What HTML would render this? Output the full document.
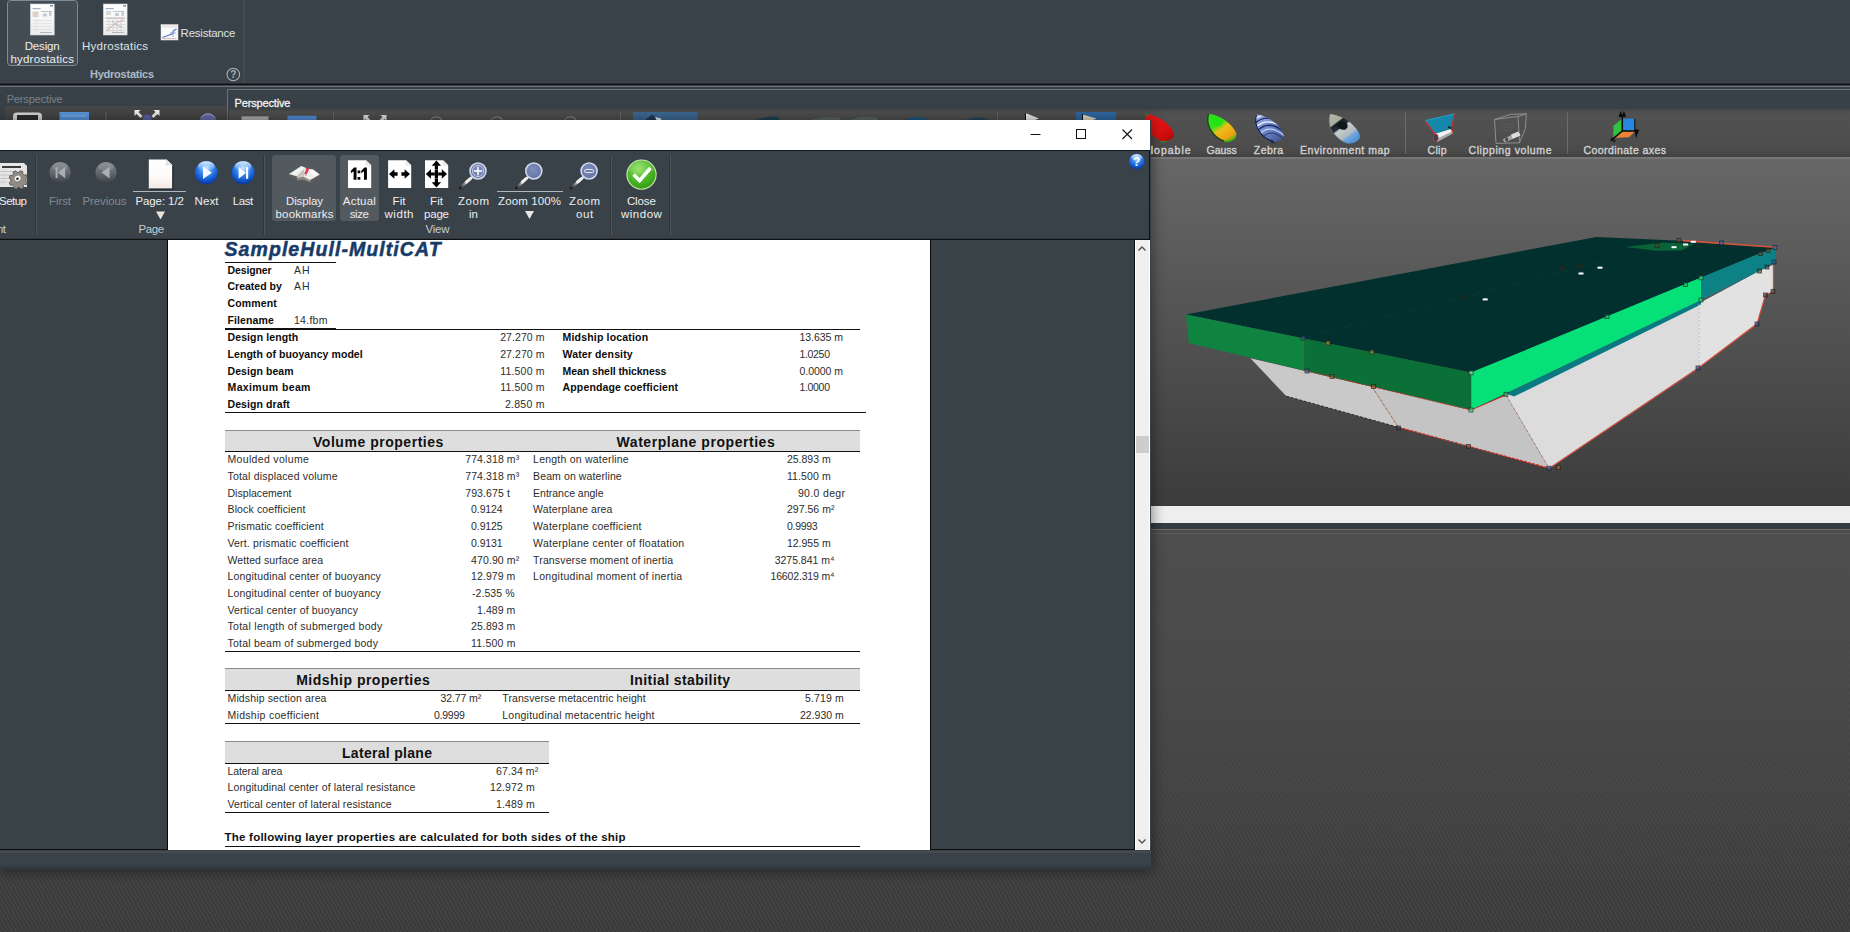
<!DOCTYPE html>
<html><head><meta charset="utf-8"><title>Design hydrostatics</title>
<style>
html,body{margin:0;padding:0;}
body{width:1850px;height:932px;overflow:hidden;position:relative;background:#444;font-family:"Liberation Sans",sans-serif;}
.a{position:absolute;}
.t{position:absolute;white-space:pre;line-height:1;font-family:"Liberation Sans",sans-serif;}
svg{position:absolute;overflow:visible;}
/* textured background */
#bg{left:0;top:0;width:1850px;height:932px;background:linear-gradient(#4e4e4e 0,#4e4e4e 540px,#4c4c4c 620px,#494949 700px,#454545 780px,#404040 860px,#3c3c3c 932px);}
#bgtex{left:0;top:520px;width:1850px;height:412px;background:repeating-linear-gradient(60deg,rgba(255,255,255,.03) 0 1.7px,rgba(0,0,0,.04) 1.7px 3.4px);-webkit-mask-image:linear-gradient(transparent 0,rgba(0,0,0,.3) 150px,#000 400px);mask-image:linear-gradient(transparent 0,rgba(0,0,0,.3) 150px,#000 400px);}
#ribbon{left:0;top:0;width:1850px;height:83px;background:#3a4249;}
#rline{left:0;top:83px;width:1850px;height:2px;background:linear-gradient(#262c31 0,#262c31 50%,#0e1113 50%);}
#rline2{left:0;top:85px;width:1850px;height:2px;background:linear-gradient(#3a4248 0,#3a4248 50%,#6a737a 50%);}
#tabrow{left:0;top:87px;width:1850px;height:34px;background:#384147;}
#tb1{left:5px;top:106px;width:222px;height:14px;background:#474747;}
#pan2{left:227px;top:89px;width:1623px;height:70px;border-top:1px solid #6a7379;border-left:1px solid #6a7379;box-sizing:border-box;background:#384147;}
#tb2{left:229px;top:108px;width:1621px;height:50px;background:linear-gradient(#3a4046 0,#3f4447 1px,#464849 2px,#4c4c4c 3px,#4f4f4f 4px,#515151 10px,#4c4c4c 40px,#484848 45px,#434343 47px,#434343 50px);}
#tbline{left:1150px;top:157px;width:700px;height:2px;background:#767676;}
#vp{left:1150px;top:159px;width:700px;height:347px;background:linear-gradient(#676767,#3c3c3c);}
#wbar{left:1150px;top:506px;width:700px;height:17px;background:#eeeeee;}
#wstrip{left:1150px;top:523px;width:700px;height:6px;background:#333c43;}
#wstrip2{left:1150px;top:529px;width:700px;height:1px;background:#707070;}
#wstrip3{left:1150px;top:533px;width:700px;height:1px;background:#5a5a5a;}
/* window */
#win{left:0;top:120px;width:1151px;height:750px;background:#3a4249;box-shadow:0 0 13px 1px rgba(0,0,0,.45);}
#title{left:0;top:0;width:1150px;height:30px;background:#fff;}
#tline{left:0;top:30px;width:1150px;height:1px;background:#14181b;}
#wrib{left:0;top:31px;width:1150px;height:87px;background:#3a4249;}
#wribline{left:0;top:118px;width:1150px;height:1px;background:#2f363c;}
#wribline2{left:0;top:119px;width:1150px;height:1px;background:#0c0e10;}
#wrb{left:1149px;top:31px;width:1px;height:89px;background:#0c0e10;}
#sbl{left:1134px;top:120px;width:1px;height:610px;background:#0c0e10;}
#docbot{left:0;top:729px;width:167px;height:1px;background:#0c0e10;}
#docbot2{left:931px;top:729px;width:204px;height:1px;background:#0c0e10;}
#winbot{left:0;top:744px;width:1151px;height:6px;background:linear-gradient(rgba(0,0,0,0),rgba(0,0,0,.22));}
#winbot2{left:0;top:731px;width:1151px;height:2px;background:#444c52;}
#docbg{left:0;top:120px;width:1134px;height:610px;background:#394247;}
#page{left:167px;top:120px;width:762px;height:610px;background:#fff;border-left:1px solid #050607;border-right:1px solid #050607;}
#sb{left:1135px;top:120px;width:15px;height:610px;background:#f0f0f0;box-shadow:inset 1px 0 0 #fff,inset -1px 0 0 #fff;}
#sbt{left:1136px;top:316px;width:13px;height:17px;background:#cdcdcd;}
.sep{position:absolute;width:1px;background:#4b545b;box-shadow:-1px 0 0 #30383e;}
.btnbg{position:absolute;background:#525a60;border-radius:3px;}
.hl{position:absolute;background:#111;height:1px;}
.band{position:absolute;background:#dedede;border-top:1px solid #8a8a8a;box-sizing:border-box;}
.band:after{content:"";position:absolute;left:0;right:0;bottom:0;height:1.3px;background:#111;}
</style></head>
<body>
<div class="a" id="bg"></div>
<div class="a" id="bgtex"></div>
<div class="a" id="ribbon"></div>
<div class="a" id="rline"></div>
<div class="a" id="rline2"></div>
<div class="a" id="tabrow"></div>
<div class="a" id="tb1"></div>
<div class="a" id="pan2"></div>
<div class="a" id="tb2"></div>
<div class="a" id="tbline"></div>
<div class="a" id="vp"></div>
<div class="a" id="wbar"></div>
<div class="a" id="wstrip"></div>
<div class="a" id="wstrip2"></div>
<div class="a" id="wstrip3"></div>

<!-- app ribbon decorations -->
<svg class="a" style="left:0;top:0" width="1850" height="160" viewBox="0 0 1850 160">
  <defs>
    <linearGradient id="gpage" x1="0" y1="0" x2="0" y2="1"><stop offset="0" stop-color="#ffffff"/><stop offset="1" stop-color="#ececec"/></linearGradient>
  </defs>
  <!-- selected button -->
  <rect x="7.5" y="0.5" width="70" height="65" rx="3" fill="#444c54" stroke="#7f8b96" stroke-width="1"/>
  <!-- page icon 1 -->
  <g>
    <rect x="30.4" y="4" width="23.8" height="31" fill="url(#gpage)" stroke="#cfd4d8" stroke-width=".6"/>
    <rect x="32.5" y="8" width="8" height="1.2" fill="#9fb3c8"/>
    <rect x="32.5" y="11.5" width="6" height="5.5" fill="#d9d3c2"/>
    <rect x="41" y="11" width="11" height="1" fill="#b9c3cc"/>
    <rect x="43" y="13.5" width="4" height="3" fill="#c5ccd6"/>
    <rect x="49" y="12" width="2.5" height="4" fill="#c5ccd6"/>
    <rect x="32.5" y="20" width="19" height=".8" fill="#dcdcdc"/>
    <rect x="32.5" y="23" width="19" height=".8" fill="#e0e0e0"/>
    <rect x="32.5" y="26" width="19" height=".8" fill="#e0e0e0"/>
    <rect x="32.5" y="29" width="19" height=".8" fill="#dcdcdc"/>
    <rect x="36" y="19" width=".8" height="12" fill="#e2e2e2"/>
    <rect x="40" y="32" width="12" height="1" fill="#b5b5b5"/>
    <rect x="50" y="5" width="3" height="1.6" fill="#8c959d"/>
  </g>
  <!-- page icon 2 -->
  <g>
    <rect x="103.3" y="4" width="23.8" height="31" fill="url(#gpage)" stroke="#cfd4d8" stroke-width=".6"/>
    <rect x="105.5" y="8" width="8" height="1.2" fill="#9fb3c8"/>
    <rect x="106" y="11" width="5" height="4" fill="#d8d8d8"/>
    <rect x="113" y="11" width="11" height="1" fill="#b9c3cc"/>
    <rect x="115" y="13" width="4" height="3" fill="#c5ccd6"/>
    <rect x="121.5" y="12" width="2.5" height="4" fill="#c5ccd6"/>
    <rect x="105.5" y="17.5" width="19.5" height="1.2" fill="#b7b7b7"/>
    <g stroke="#cfcfcf" stroke-width=".7" fill="none">
      <path d="M105.5 21.5h19.5M105.5 24.5h19.5M105.5 27.5h19.5M105.5 30.5h19.5M109 19v13M113 19v13M117 19v13M121 19v13"/>
    </g>
    <path d="M106 31 L112 26 L118 22 L124 20" stroke="#d9a0a0" stroke-width=".8" fill="none"/>
    <path d="M112 21 L116 25 L122 27" stroke="#9fb0d8" stroke-width=".8" fill="none"/>
    <rect x="112" y="32" width="12" height="1" fill="#b5b5b5"/>
    <rect x="123" y="5" width="3" height="1.6" fill="#8c959d"/>
  </g>
  <!-- resistance icon -->
  <g>
    <rect x="161" y="24.6" width="17" height="15.4" fill="#fbfbfb" stroke="#d5d5d5" stroke-width=".6"/>
    <rect x="162" y="25.5" width="15" height="2" fill="#e6e6e6"/>
    <path d="M162.5 37.5 L168 35.5 L172 34 L174 30.5 L176.5 29" stroke="#4f79c8" stroke-width="1.2" fill="none"/>
    <path d="M162.5 38.5 h14" stroke="#d8a8a8" stroke-width=".8"/>
    <path d="M170 33 h6 M173 30 v7" stroke="#7d97d0" stroke-width=".8"/>
  </g>
  <!-- help circle -->
  <circle cx="233.3" cy="74.5" r="6.3" fill="none" stroke="#a9b3bc" stroke-width="1.1"/>
  <text x="233.3" y="78.3" text-anchor="middle" font-family="Liberation Sans, sans-serif" font-size="10" font-weight="bold" fill="#a9b3bc">?</text>
  <rect x="243.2" y="0" width="1.3" height="83" fill="#4a535a"/>
  <rect x="242.2" y="0" width="1" height="83" fill="#353d43"/>

  <!-- left perspective toolbar (mostly hidden by window) -->
  <path d="M13 120 V116 Q13 112.5 17 112.5 H38 Q42 112.5 42 116 V120 Z" fill="#dcdcdc"/>
  <rect x="17" y="115" width="21" height="5" fill="#2e2e2e"/>
  <rect x="59.5" y="112" width="29.5" height="8" fill="#5b9be2"/>
  <rect x="62" y="115.5" width="24" height="1" fill="#8cbcf0"/>
  <rect x="105.5" y="112" width="1" height="8" fill="#6a6a6a"/>
  <g fill="#f4f4f4">
    <path d="M134.5 110 h6 l-2 2 l4 4 l-2 2 l-4 -4 l-2 2 z"/>
    <path d="M159.5 110 h-6 l2 2 l-4 4 l2 2 l4 -4 l2 2 z"/>
  </g>
  <circle cx="147" cy="119" r="4.5" fill="#5d62a5"/>
  <circle cx="208" cy="122" r="8.5" fill="#6b6fae"/>
  <path d="M201 117.5 a8.5 8.5 0 0 1 14 0" stroke="#a8abd6" stroke-width="1" fill="none"/>

  <!-- second toolbar hints -->
  <rect x="241.5" y="116.4" width="27" height="3.6" fill="#b4b4b4"/>
  <rect x="287.5" y="115.8" width="29" height="4.2" fill="#5590dc"/>
  <rect x="333" y="112" width="1" height="8" fill="#6a6a6a"/>
  <g fill="#e8e8e8">
    <path d="M363.5 115 h6 l-2 2 l3 3 h-4 l-1 -1 l-2 2 z"/>
    <path d="M386.5 115 h-6 l2 2 l-3 3 h4 l1 -1 l2 2 z"/>
  </g>
  <path d="M431 121 a5.5 4 0 0 1 11 0" fill="none" stroke="#8a8a8a" stroke-width="1.2"/>
  <path d="M491.5 121 a5.5 4 0 0 1 11 0" fill="none" stroke="#8a8a8a" stroke-width="1.2"/>
  <path d="M565 121 a5.5 4 0 0 1 11 0" fill="none" stroke="#8a8a8a" stroke-width="1.2"/>
  <rect x="620" y="112" width="1" height="8" fill="#6a6a6a"/>
  <rect x="633" y="112" width="64.5" height="8" fill="#3f6b95"/>
  <path d="M645 120 L652 114.5 L660 120 Z" fill="#1e3c58"/>
  <path d="M655 117 l5.5 1.2 l1 1.8 h-5 z" fill="#e8f4f8"/>
  <path d="M757 120 q10 -5 22 -3 v3 z" fill="#1f4458"/>
  <path d="M810 120 q14 -4 30 -2 v2 z" fill="#5d6a6a"/>
  <path d="M850 120 q12 -5 28 -2 v2 z" fill="#5d6a6a"/>
  <path d="M905 120 q10 -6 22 -1 v1 z" fill="#1f5a80"/>
  <path d="M965 120 q10 -5 22 -1 v1 z" fill="#27485f"/>
  <rect x="997" y="112" width="1" height="8" fill="#6a6a6a"/>
  <path d="M1025.5 113 l13.5 5.5 l-4 1.5 h-9.5 z" fill="#f4f4f4"/>
  <path d="M1025.5 113 v7" stroke="#111" stroke-width="1"/>
  <rect x="1076" y="112" width="40" height="8" fill="#2f6aa6"/>
  <path d="M1082.5 114.5 l14 4 l-3 1.5 h-11 z" fill="#e8e0c8"/>
  <path d="M1082.5 114 v6" stroke="#111" stroke-width="1"/>
</svg>


<!-- right toolbar icons -->
<svg class="a" style="left:1140px;top:105px" width="710" height="55" viewBox="1140 105 710 55">
  <defs>
    <linearGradient id="gred" x1="0" y1="0" x2="1" y2="1"><stop offset="0" stop-color="#e81818"/><stop offset=".6" stop-color="#e01010"/><stop offset="1" stop-color="#a80808"/></linearGradient>
    <linearGradient id="ggauss" x1="0.1" y1="0" x2=".8" y2="1"><stop offset="0" stop-color="#28e018"/><stop offset=".38" stop-color="#38e020"/><stop offset=".55" stop-color="#e8c018"/><stop offset=".85" stop-color="#f0a010"/><stop offset="1" stop-color="#58b010"/></linearGradient>
    <linearGradient id="gzeb" x1="0" y1="0" x2="1" y2="1"><stop offset="0" stop-color="#9fb4e8"/><stop offset=".5" stop-color="#6c86c8"/><stop offset="1" stop-color="#3c4f8c"/></linearGradient>
    <linearGradient id="genv" x1="0" y1="0" x2=".8" y2="1"><stop offset="0" stop-color="#b9b9a8"/><stop offset=".28" stop-color="#a8ad9f"/><stop offset=".32" stop-color="#1c2226"/><stop offset=".45" stop-color="#24303a"/><stop offset=".5" stop-color="#c8cccc"/><stop offset=".72" stop-color="#b4bcc0"/><stop offset=".8" stop-color="#6ea6dc"/><stop offset="1" stop-color="#4f8fd0"/></linearGradient>
  </defs>
  <!-- developable (red) -->
  <g transform="translate(1146.2 114)">
    <path d="M0 0 C7.3 .5 17.3 5 23.8 13 C27.3 17.5 28.8 21 26.8 23.5 C24.3 26.5 19.3 27.8 15.3 27 C7.3 24.5 .3 16 -.7 9 C-1.1 5 -.9 2 0 0 Z" fill="url(#gred)"/>
    <path d="M-.8 -.6 l3 2.2" stroke="#2a8a2a" stroke-width="1.6"/>
    <path d="M14 27.2 q3 1.2 6.5 0" stroke="#3a8a2a" stroke-width="1.2" fill="none"/>
  </g>
  <!-- gauss -->
  <g transform="translate(1208.7 114)">
    <path d="M0 0 C7.3 .5 17.3 5 23.8 13 C27.3 17.5 28.8 21 26.8 23.5 C24.3 26.5 19.3 27.8 15.3 27 C7.3 24.5 .3 16 -.7 9 C-1.1 5 -.9 2 0 0 Z" fill="url(#ggauss)"/>
    <ellipse cx="8" cy="7.5" rx="6" ry="4.6" transform="rotate(35 8 7.5)" fill="#1ee410" opacity=".85"/>
    <path d="M0 0 C-.9 2 -1.1 5 -.7 9 C.3 16 7.3 24.5 15.3 27" fill="none" stroke="#10400c" stroke-width="1.4" opacity=".85"/>
    <path d="M15.3 27 C19.3 27.8 24.3 26.5 26.8 23.5" fill="none" stroke="#3cae10" stroke-width="1.6"/>
  </g>
  <!-- zebra -->
  <g transform="translate(1256 114.6)">
    <clipPath id="czeb"><path d="M0 0 C7.3 .5 17.3 5 23.8 13 C27.3 17.5 28.8 21 26.8 23.5 C24.3 26.5 19.3 27.8 15.3 27 C7.3 24.5 .3 16 -.7 9 C-1.1 5 -.9 2 0 0 Z"/></clipPath>
    <path d="M0 0 C7.3 .5 17.3 5 23.8 13 C27.3 17.5 28.8 21 26.8 23.5 C24.3 26.5 19.3 27.8 15.3 27 C7.3 24.5 .3 16 -.7 9 C-1.1 5 -.9 2 0 0 Z" fill="url(#gzeb)"/>
    <g clip-path="url(#czeb)" fill="none" stroke-width="1.3">
      <path d="M-3 6 C6 -2 16 -1 24 6" stroke="#f2f5ff"/>
      <path d="M-2 9.5 C7 1 17 2.5 26 10" stroke="#1d2c66"/>
      <path d="M-1 13 C8 4.5 18 6 28 14" stroke="#f2f5ff"/>
      <path d="M1 16.5 C9 8 19 9.5 29 18" stroke="#1d2c66"/>
      <path d="M3 20 C10.5 11.5 20 13.5 29 22" stroke="#dfe6ff" opacity=".8"/>
      <path d="M6 23.5 C12 15.5 21 17.5 29 26" stroke="#1d2c66" opacity=".6"/>
      <path d="M0 0 C-.9 2 -1.1 5 -.7 9 C.3 16 7.3 24.5 15.3 27" stroke="#121a40" stroke-width="2.4"/>
    </g>
    <path d="M15.5 24.5 l4 4.5 l-4.6 -.6 z" fill="#1a244f"/>
  </g>
  <!-- environment map -->
  <g transform="translate(1330 114) scale(1.08)">
    <path d="M0 0 C7.3 .5 17.3 5 23.8 13 C27.3 17.5 28.8 21 26.8 23.5 C24.3 26.5 19.3 27.8 15.3 27 C7.3 24.5 .3 16 -.7 9 C-1.1 5 -.9 2 0 0 Z" fill="url(#genv)"/>
    <path d="M5.5 10.5 C10 4.5 15 6 16.5 11 C15.5 15.5 10.5 16.5 5.5 10.5 Z" fill="#10181c"/>
    <path d="M0 0 C-.9 2 -1.1 5 -.7 9 C.3 16 7.3 24.5 15.3 27" fill="none" stroke="#5a6670" stroke-width="1" opacity=".7"/>
  </g>
  <!-- separators -->
  <rect x="1405" y="112.5" width="1" height="41" fill="#6c6c6c"/>
  <rect x="1567" y="112.5" width="1" height="41" fill="#6c6c6c"/>
  <!-- clip -->
  <g>
    <path d="M1425 120.6 L1454.6 113.8 L1450.6 128.6 L1435.2 133.8 Z" fill="#1688ac"/>
    <path d="M1425 120.6 L1454.6 113.8" stroke="#22a0c0" stroke-width="1" fill="none"/>
    <path d="M1425.2 121 L1435 134.2 M1454.4 114.2 L1451.6 128.6 L1453.4 133.5" stroke="#c83030" stroke-width="1.3" fill="none"/>
    <path d="M1434.6 134 L1450.8 129 L1452.4 133.4 L1437.2 141.8 Z" fill="#f2f2f2"/>
    <path d="M1437.6 138.4 L1452 131.4 L1452.4 133.4 L1437.2 141.8 Z" fill="#a8a8a8"/>
    <ellipse cx="1435.6" cy="137.8" rx="2.5" ry="3.8" fill="#3a3f5a" stroke="#c83030" stroke-width="1"/>
    <path d="M1448 126.8 L1451.4 128.4" stroke="#10202a" stroke-width="1.8"/>
  </g>
  <!-- clipping volume -->
  <g fill="none" stroke="#8f8f8f" stroke-width="1">
    <path d="M1494.5 119.5 L1518 116.4 L1519.5 142.8 L1496 143.4 Z"/>
    <path d="M1494.5 119.5 L1510.5 114.4 L1526.4 113.8 L1518 116.4"/>
    <path d="M1526.4 113.8 L1525.4 128.5 L1519.5 142.8"/>
    <path d="M1500 124 h14 M1500 127 h14 M1500 130 h13" stroke="#5f5f5f" stroke-width=".6"/>
  </g>
  <path d="M1502.5 139.6 L1518.4 131.4 L1520.4 135.4 L1505 142.6 Z" fill="#a4a4a4"/>
  <path d="M1511 134.6 L1518.4 131.4 L1520.4 135.4 L1512.6 138.8 Z" fill="#dcdcdc"/>
  <ellipse cx="1506.6" cy="139.4" rx="1.6" ry="2" fill="#4a4a4a"/>
  <!-- coordinate axes -->
  <g>
    <path d="M1622.3 118.7 V130.8 L1613.4 139 V125.8 Z" fill="#30c23e"/>
    <rect x="1622.3" y="118.7" width="12.5" height="12" fill="#2688e0"/>
    <path d="M1622.3 131.6 H1634.8 L1629 137.2 L1615.8 137.8 Z" fill="#ee8434"/>
    <path d="M1622.3 131 V114.5 M1622.3 131 H1637.6 M1622.3 131 L1611.6 139.8" stroke="#0c0c0c" stroke-width="1.5" fill="none"/>
    <path d="M1634.8 118.7 V131" stroke="#0c0c0c" stroke-width="1" fill="none"/>
    <path d="M1619.2 117 L1620.7 112.6 L1622.2 117 M1622.4 117 L1623.9 112.6 L1625.4 117" stroke="#0c0c0c" stroke-width="1.2" fill="#0c0c0c"/>
    <path d="M1634.6 129 L1639.4 130 L1637.6 133.6 L1636.4 138.6 L1635 133.6 Z" fill="#0c0c0c"/>
    <path d="M1610.2 141.2 L1611.4 137.4 L1614.6 140 Z" fill="#0c0c0c"/>
    <path d="M1613.2 141.8 l2.4 -1.4" stroke="#0c0c0c" stroke-width="1.2"/>
  </g>
</svg>


<!-- 3D hull -->
<svg class="a" style="left:1150px;top:158px" width="700" height="348" viewBox="1150 158 700 348">
  <!-- hull left-front (grey) -->
  <path d="M1250.4 358.2 L1372 386.8 L1398.3 427.3 L1286.4 396.2 Z" fill="#c9c9c9"/>
  <path d="M1372 386.5 L1471 410 L1506 395 L1549 468.2 L1398.3 427.3 Z" fill="#c4c4c4"/>
  <!-- hull right side (light) -->
  <path d="M1506 395 L1701 302.5 L1759.5 271 L1773.2 265 L1773.2 291.6 L1765.5 294.4 L1757 323.6 L1698 368 L1549 468.2 Z" fill="#dcdcdc"/>
  <path d="M1699 303.5 L1759.5 271 L1773.2 265 L1773.2 291.6 L1765.5 294.4 L1757 323.6 L1699 367.4 Z" fill="#e2e2e2"/>
  <!-- deck -->
  <path d="M1186 314.5 L1596.6 236.9 L1675 240.5 L1775 247.4 L1471 372.6 Z" fill="#02302e"/>
  <path d="M1625 247 L1663 242.6 L1694 244 L1681 250.6 L1656 250.8 Z" fill="#0a6238"/>
  <path d="M1303 338 L1600 262" stroke="#0a3c36" stroke-width="1" stroke-dasharray="3 3" fill="none"/>
  <!-- front green side -->
  <path d="M1186 314.5 L1304 338.5 L1304 370.4 L1188.6 343 Z" fill="#0f8440"/>
  <path d="M1304 338.5 L1471 372.6 L1471 410 L1304 370.4 Z" fill="#0b6f38"/>
  <!-- teal strip + light green side + teal side -->
  <path d="M1506 393.6 L1701 299.8 L1701 304.6 L1514 396.6 Z" fill="#0a7a82"/>
  <path d="M1471 372.6 L1701 277.6 L1701 300 L1471 410 Z" fill="#06e078"/>
  <path d="M1701 277.6 L1760.8 252.9 L1775 248.2 L1775 263 L1759.6 270.8 L1701 300 Z" fill="#0c8286"/>
  <!-- edges -->
  <g fill="none">
    <path d="M1683 240.6 L1775 247.2" stroke="#d4543e" stroke-width="1.6"/>
    <path d="M1304 370.4 L1471 410" stroke="#c23a2a" stroke-width="1" stroke-dasharray="3 1.5"/>
    <path d="M1471 410 L1506 395" stroke="#b83a2a" stroke-width="1"/>
    <path d="M1372 386.8 L1398.3 427.3" stroke="#b8604a" stroke-width=".9" stroke-dasharray="3 2"/>
    <path d="M1506 395 L1549 468.2" stroke="#a8705a" stroke-width=".8" stroke-dasharray="3 2"/>
    <path d="M1286.4 396.2 L1398.3 427.3" stroke="#2a2a2a" stroke-width="1" stroke-dasharray="3 1.5"/>
    <path d="M1398.3 427.3 L1549 468.2" stroke="#c0281c" stroke-width="1.3" stroke-dasharray="3 1.2"/>
    <path d="M1549 468.4 L1698 368.2 L1757 323.8 L1765.5 294.6 L1773.4 291.8 L1773.4 265" stroke="#d4503e" stroke-width="1.2"/>
    <path d="M1699 304 V367" stroke="#b8b8c4" stroke-width=".8" stroke-dasharray="2 2"/>
    <path d="M1304 339 V370" stroke="#8a5a2a" stroke-width=".8" stroke-dasharray="2 2" opacity=".7"/>
    <path d="M1471 373 V410" stroke="#0a6a3a" stroke-width=".8" opacity=".6"/>
  </g>
  <!-- markers -->
  <rect x="1301.0" y="336.0" width="4.0" height="4.0" fill="#2a5a9a" fill-opacity=".6" stroke="#20201c" stroke-opacity=".75" stroke-width=".8"/>
  <rect x="1326.0" y="341.0" width="4.0" height="4.0" fill="#c89a20" fill-opacity=".6" stroke="#20201c" stroke-opacity=".75" stroke-width=".8"/>
  <rect x="1370.0" y="350.0" width="4.0" height="4.0" fill="#b89a30" fill-opacity=".6" stroke="#20201c" stroke-opacity=".75" stroke-width=".8"/>
  <rect x="1305.0" y="369.0" width="4.0" height="4.0" fill="#2a6ab0" fill-opacity=".6" stroke="#20201c" stroke-opacity=".75" stroke-width=".8"/>
  <rect x="1330.0" y="374.5" width="4.0" height="4.0" fill="#8a5a2a" fill-opacity=".6" stroke="#20201c" stroke-opacity=".75" stroke-width=".8"/>
  <rect x="1371.5" y="384.5" width="4.0" height="4.0" fill="#8a5a2a" fill-opacity=".6" stroke="#20201c" stroke-opacity=".75" stroke-width=".8"/>
  <rect x="1469.0" y="370.8" width="4.0" height="4.0" fill="#9af0c0" fill-opacity=".6" stroke="#20201c" stroke-opacity=".75" stroke-width=".8"/>
  <rect x="1469.0" y="408.0" width="4.0" height="4.0" fill="#30e080" fill-opacity=".6" stroke="#20201c" stroke-opacity=".75" stroke-width=".8"/>
  <rect x="1504.0" y="392.3" width="4.0" height="4.0" fill="#30c070" fill-opacity=".6" stroke="#20201c" stroke-opacity=".75" stroke-width=".8"/>
  <rect x="1396.5" y="426.0" width="4.0" height="4.0" fill="#203a6a" fill-opacity=".6" stroke="#20201c" stroke-opacity=".75" stroke-width=".8"/>
  <rect x="1466.5" y="444.5" width="4.0" height="4.0" fill="#8a4a2a" fill-opacity=".6" stroke="#20201c" stroke-opacity=".75" stroke-width=".8"/>
  <rect x="1547.0" y="466.2" width="4.0" height="4.0" fill="#2a5ab0" fill-opacity=".6" stroke="#20201c" stroke-opacity=".75" stroke-width=".8"/>
  <rect x="1556.5" y="465.6" width="4.0" height="4.0" fill="#b8602a" fill-opacity=".6" stroke="#20201c" stroke-opacity=".75" stroke-width=".8"/>
  <rect x="1696.0" y="366.0" width="4.0" height="4.0" fill="#2a4a9a" fill-opacity=".6" stroke="#20201c" stroke-opacity=".75" stroke-width=".8"/>
  <rect x="1755.0" y="322.0" width="4.0" height="4.0" fill="#2a4a9a" fill-opacity=".6" stroke="#20201c" stroke-opacity=".75" stroke-width=".8"/>
  <rect x="1763.5" y="293.0" width="4.0" height="4.0" fill="#3a3a3a" fill-opacity=".6" stroke="#20201c" stroke-opacity=".75" stroke-width=".8"/>
  <rect x="1771.0" y="289.5" width="4.0" height="4.0" fill="#3a3a3a" fill-opacity=".6" stroke="#20201c" stroke-opacity=".75" stroke-width=".8"/>
  <rect x="1773.0" y="245.5" width="4.0" height="4.0" fill="#2a6ac0" fill-opacity=".6" stroke="#20201c" stroke-opacity=".75" stroke-width=".8"/>
  <rect x="1699.0" y="275.8" width="4.0" height="4.0" fill="#40e090" fill-opacity=".6" stroke="#20201c" stroke-opacity=".75" stroke-width=".8"/>
  <rect x="1699.0" y="298.0" width="4.0" height="4.0" fill="#30d080" fill-opacity=".6" stroke="#20201c" stroke-opacity=".75" stroke-width=".8"/>
  <rect x="1683.6" y="282.4" width="4.0" height="4.0" fill="#20b060" fill-opacity=".6" stroke="#20201c" stroke-opacity=".75" stroke-width=".8"/>
  <rect x="1605.0" y="314.6" width="4.0" height="4.0" fill="#20b060" fill-opacity=".6" stroke="#20201c" stroke-opacity=".75" stroke-width=".8"/>
  <rect x="1758.5" y="251.5" width="4.0" height="4.0" fill="#5a4a2a" fill-opacity=".6" stroke="#20201c" stroke-opacity=".75" stroke-width=".8"/>
  <rect x="1757.5" y="269.0" width="4.0" height="4.0" fill="#4a4a2a" fill-opacity=".6" stroke="#20201c" stroke-opacity=".75" stroke-width=".8"/>
  <rect x="1766.0" y="248.5" width="4.0" height="4.0" fill="#6a4a2a" fill-opacity=".6" stroke="#20201c" stroke-opacity=".75" stroke-width=".8"/>
  <rect x="1765.0" y="265.0" width="4.0" height="4.0" fill="#3a3a3a" fill-opacity=".6" stroke="#20201c" stroke-opacity=".75" stroke-width=".8"/>
  <rect x="1772.0" y="260.0" width="4.0" height="4.0" fill="#2a4a9a" fill-opacity=".6" stroke="#20201c" stroke-opacity=".75" stroke-width=".8"/>
  <rect x="1460.0" y="295.0" width="4.0" height="4.0" fill="#2a2a1a" fill-opacity=".6" stroke="#20201c" stroke-opacity=".75" stroke-width=".8"/>
  <rect x="1560.0" y="266.6" width="4.0" height="4.0" fill="#3a2a1a" fill-opacity=".6" stroke="#20201c" stroke-opacity=".75" stroke-width=".8"/>
  <rect x="1578.0" y="264.3" width="4.0" height="4.0" fill="#3a2a1a" fill-opacity=".6" stroke="#20201c" stroke-opacity=".75" stroke-width=".8"/>
  <rect x="1676.8" y="238.6" width="4.0" height="4.0" fill="#6a4a1a" fill-opacity=".6" stroke="#20201c" stroke-opacity=".75" stroke-width=".8"/>
  <rect x="1655.0" y="243.6" width="4.0" height="4.0" fill="#4a4a1a" fill-opacity=".6" stroke="#20201c" stroke-opacity=".75" stroke-width=".8"/>
  <rect x="1719.6" y="241.0" width="4.0" height="4.0" fill="#2a5ab0" fill-opacity=".6" stroke="#20201c" stroke-opacity=".75" stroke-width=".8"/>
  <rect x="1482.7" y="298.4" width="5" height="2" fill="#fff"/>
  <rect x="1597.5" y="266.7" width="5" height="2" fill="#fff"/>
  <rect x="1578.5" y="272.5" width="5" height="2" fill="#fff"/>
  <rect x="1690.8" y="240.8" width="5" height="2" fill="#fff"/>
  <rect x="1683.1" y="243.5" width="5" height="2" fill="#fff"/>
  <rect x="1671.5" y="246.2" width="5" height="2" fill="#fff"/>
</svg>

<div class="a" id="win">
  <div class="a" id="title"></div>
  <div class="a" id="tline"></div>
  <div class="a" id="wrib"></div>
  <div class="a" id="wribline"></div>
  <div class="a" id="wribline2"></div>
  <div class="a" id="wrb"></div>
  <div class="a" id="docbg"></div>
  <div class="a" id="page"></div>
  <div class="a" id="sb"></div>
  <div class="a" id="sbt"></div>
  <div class="a" id="sbl"></div>
  <div class="a" id="docbot"></div>
  <div class="a" id="docbot2"></div>
  <div class="a" id="winbot"></div>
  <div class="a" id="winbot2"></div>
</div>

<!-- window ribbon separators / button backgrounds -->
<div class="sep" style="left:36px;top:155px;height:80px"></div>
<div class="sep" style="left:264px;top:155px;height:80px"></div>
<div class="sep" style="left:611px;top:155px;height:80px"></div>
<div class="sep" style="left:670px;top:155px;height:80px"></div>
<div class="btnbg" style="left:272px;top:155px;width:64px;height:66px"></div>
<div class="btnbg" style="left:340px;top:155px;width:39px;height:66px"></div>
<div class="a" style="left:133px;top:191px;width:53px;height:1px;background:#aeb7be"></div>
<div class="a" style="left:497px;top:191px;width:66px;height:1px;background:#aeb7be"></div>

<svg class="a" style="left:0;top:120px" width="1150" height="130" viewBox="0 120 1150 130">
  <defs>
    <radialGradient id="gblue" cx=".5" cy=".3" r=".75"><stop offset="0" stop-color="#d8eeff"/><stop offset=".3" stop-color="#4a96f2"/><stop offset=".65" stop-color="#1560d4"/><stop offset=".9" stop-color="#0a3aa4"/><stop offset="1" stop-color="#082a7c"/></radialGradient>
    <linearGradient id="gblue2" x1="0" y1="0" x2="0" y2="1"><stop offset="0" stop-color="#e8f4ff" stop-opacity=".95"/><stop offset="1" stop-color="#9ccaff" stop-opacity=".1"/></linearGradient>
    <linearGradient id="ggrey" x1="0" y1="0" x2="0" y2="1"><stop offset="0" stop-color="#82878c"/><stop offset=".55" stop-color="#5f656b"/><stop offset="1" stop-color="#3a4147"/></linearGradient>
    <linearGradient id="gpg" x1="0" y1="0" x2="0" y2="1"><stop offset="0" stop-color="#ffffff"/><stop offset=".55" stop-color="#fdfbfa"/><stop offset="1" stop-color="#f3e9e5"/></linearGradient>
    <radialGradient id="ggreen" cx=".4" cy=".3" r=".8"><stop offset="0" stop-color="#8be05a"/><stop offset=".5" stop-color="#4fb828"/><stop offset="1" stop-color="#2a9410"/></radialGradient>
    <linearGradient id="ghandle" x1="1" y1="0" x2="0" y2="1"><stop offset="0" stop-color="#f4f4f4"/><stop offset=".45" stop-color="#c8c8c8"/><stop offset="1" stop-color="#1a1a1a"/></linearGradient>
    <radialGradient id="glens" cx=".45" cy=".4" r=".7"><stop offset="0" stop-color="#7d8dbd"/><stop offset="1" stop-color="#62729f"/></radialGradient>
  </defs>
  <!-- title bar buttons -->
  <path d="M1030.5 134.5 h10" stroke="#111" stroke-width="1"/>
  <rect x="1076.5" y="129.5" width="9" height="9" fill="none" stroke="#111" stroke-width="1"/>
  <path d="M1122.5 129.5 l9.5 9.5 M1132 129.5 l-9.5 9.5" stroke="#111" stroke-width="1.1"/>
  <!-- help -->
  <circle cx="1136.7" cy="161.6" r="7.8" fill="url(#gblue)"/>
  <ellipse cx="1136.7" cy="157.6" rx="5.6" ry="3.4" fill="url(#gblue2)"/>
  <text x="1136.7" y="166.2" text-anchor="middle" font-family="Liberation Sans, sans-serif" font-size="12" font-weight="bold" fill="#fff">?</text>

  <!-- Setup icon -->
  <g>
    <path d="M-2 163 H24 L27 166 V187 H-2 Z" fill="#e6e6e6"/>
    <rect x="2" y="166" width="19" height="2" fill="#3a3a3a"/>
    <path d="M-2 171.5 h16 M-2 175 h12 M-2 178.5 h10 M-2 182 h9" stroke="#c4c4c4" stroke-width="1"/>
    <path d="M4 169 v16" stroke="#d4d4d4" stroke-width="1"/>
    <g transform="translate(17.6 178.4) rotate(-25) scale(.85)">
      <path d="M-1.8 -9 h3.6 l.6 2.3 l2 .9 l2.1 -1.2 l2.5 2.5 l-1.2 2.1 l.9 2 l2.3 .6 v3.6 l-2.3 .6 l-.9 2 l1.2 2.1 l-2.5 2.5 l-2.1 -1.2 l-2 .9 l-.6 2.3 h-3.6 l-.6 -2.3 l-2 -.9 l-2.1 1.2 l-2.5 -2.5 l1.2 -2.1 l-.9 -2 l-2.3 -.6 v-3.6 l2.3 -.6 l.9 -2 l-1.2 -2.1 l2.5 -2.5 l2.1 1.2 l2 -.9 z" fill="#918b85" stroke="#4e4a46" stroke-width=".8"/>
      <ellipse cx="0" cy="0" rx="3.6" ry="3.2" fill="#f6f6f6"/>
      <ellipse cx="-.3" cy=".2" rx="1.7" ry="1.3" fill="#222"/>
    </g>
  </g>
  <!-- First (disabled) -->
  <g>
    <circle cx="60.1" cy="172.6" r="10.6" fill="url(#ggrey)"/>
    <ellipse cx="60.1" cy="166.8" rx="7.6" ry="4.4" fill="#a0a5aa" opacity=".35"/>
    <rect x="55.6" y="167.2" width="2" height="10.8" fill="#a9aeb3"/>
    <path d="M65.2 167 V178.2 L57.8 172.6 Z" fill="#a9aeb3"/>
  </g>
  <!-- Previous (disabled) -->
  <g>
    <circle cx="106.1" cy="172.6" r="10.6" fill="url(#ggrey)"/>
    <ellipse cx="106.1" cy="166.8" rx="7.6" ry="4.4" fill="#a0a5aa" opacity=".35"/>
    <path d="M109.6 166.6 V178.6 L101.6 172.6 Z" fill="#a9aeb3"/>
  </g>
  <!-- Page icon -->
  <path d="M148.8 159.4 H166.5 L172.2 165 V188.5 H148.8 Z" fill="url(#gpg)"/>
  <path d="M166.5 159.4 V165 H172.2" fill="#e9e9e9" stroke="#c9c9c9" stroke-width=".5"/>
  <path d="M173 166 V189.3 H150" fill="none" stroke="#262c31" stroke-width="1.2"/>
  <!-- Next -->
  <g>
    <circle cx="206.3" cy="172.8" r="11.5" fill="url(#gblue)"/>
    <ellipse cx="206.3" cy="166.2" rx="8.3" ry="5" fill="url(#gblue2)"/>
    <path d="M203 166.6 L212 172.8 L203 179 Z" fill="#f4faff"/>
  </g>
  <!-- Last -->
  <g>
    <circle cx="243.1" cy="172.8" r="11.5" fill="url(#gblue)"/>
    <ellipse cx="243.1" cy="166.2" rx="8.3" ry="5" fill="url(#gblue2)"/>
    <path d="M238.6 166.8 L246 172.8 L238.6 178.8 Z" fill="#f4faff"/>
    <rect x="246" y="166.8" width="2.2" height="12" fill="#f4faff"/>
  </g>
  <!-- page dropdown arrows -->
  <path d="M156 211.6 H165 L160.5 219.6 Z" fill="#e9e3dc"/>
  <path d="M525 211 H534 L529.5 219 Z" fill="#e6e6e6"/>

  <!-- Display bookmarks: open book -->
  <g>
    <path d="M288.6 174.2 L301.2 166.6 L312.9 169.6 L320.1 174.6 L320 176.2 L310.6 183.2 L304 180.4 L296.6 180.8 L288.6 176 Z" fill="#615d58"/>
    <path d="M296.9 178.2 L304.2 177.2 L304 179.6 L297 180.2 Z" fill="#8a8680"/>
    <path d="M304.2 177.3 L310.3 180.1 L310.5 182.2 L304 179.6 Z" fill="#9a968f"/>
    <path d="M288.9 174 L301.2 166.1 L306.2 167.9 L297.2 176.4 Z" fill="#e9e9e9"/>
    <path d="M292.5 173.6 L302.6 166.8 L304 167.3 L294.4 174.6 Z" fill="#fbfbfb"/>
    <path d="M297.2 176.4 L306.2 167.9 L304.4 177 L296.9 178 Z" fill="#c9c7c3"/>
    <path d="M304.3 168.5 L312.9 169.2 L319.8 174.4 L310.2 179.9 L304 177.1 Z" fill="#efefef"/>
    <path d="M309.5 170.2 L313.2 170.4 L318 174.2 L313.6 176.6 Z" fill="#fdfdfd"/>
    <path d="M306.9 167.6 L309.5 168.3 L306.6 174.6 L304.2 173.9 Z" fill="#d43a52"/>
    <path d="M305.4 174.2 L306.9 174.6 L306.2 176 L304.8 175.6 Z" fill="#e8909c"/>
  </g>
  <!-- Actual size page -->
  <g>
    <path d="M348 160.2 H366 L371.2 165.3 V188 H348 Z" fill="#fff"/>
    <path d="M366 160.2 V165.3 H371.2" fill="#efefef" stroke="#d0d0d0" stroke-width=".4"/>
    <path d="M350.9 170.8 L354.09999999999997 167.4 H356.5 V179.70000000000002 H353.59999999999997 V171.3 L350.9 173.3 Z M361.3 170.8 L364.5 167.4 H366.90000000000003 V179.70000000000002 H364.0 V171.3 L361.3 173.3 Z M357.6 170.6 h2.7 v2.7 h-2.7 Z M357.6 177 h2.7 v2.7 h-2.7 Z" fill="#000"/>
  </g>
  <!-- Fit width page -->
  <g>
    <path d="M388.1 160.2 H406 L411.2 165.3 V188 H388.1 Z" fill="#fff"/>
    <path d="M406 160.2 V165.3 H411.2" fill="#efefef" stroke="#d0d0d0" stroke-width=".4"/>
    <path d="M389 174 L394.4 169.2 V172.3 H397.6 V175.7 H394.4 V178.8 Z" fill="#000"/>
    <path d="M410 174 L404.6 169.2 V172.3 H401.4 V175.7 H404.6 V178.8 Z" fill="#000"/>
  </g>
  <!-- Fit page -->
  <g>
    <path d="M425 160.2 H443 L448.2 165.3 V188 H425 Z" fill="#fff"/>
    <path d="M443 160.2 V165.3 H448.2" fill="#efefef" stroke="#d0d0d0" stroke-width=".4"/>
    <g fill="#000">
      <path d="M425.8 174 L431 169.3 V172.4 H434.6 V175.6 H431 V178.7 Z"/>
      <path d="M447 174 L441.8 169.3 V172.4 H438.2 V175.6 H441.8 V178.7 Z"/>
      <path d="M436.4 160.6 L441.1 165.8 H438 V169.6 H434.8 V165.8 H431.7 Z"/>
      <path d="M436.4 187.4 L441.1 182.2 H438 V178.4 H434.8 V182.2 H431.7 Z"/>
      <rect x="434.6" y="172.4" width="3.6" height="3.2"/>
      <rect x="434.8" y="169.6" width="3.2" height="8.8"/>
    </g>
  </g>
  <!-- magnifiers -->
  <g id="mag1">
    <path d="M471.6 177.6 L460 188" stroke="url(#ghandle)" stroke-width="2.6" stroke-linecap="round"/>
    <path d="M470.4 178.6 L466.5 182" stroke="#ececec" stroke-width="3" stroke-linecap="round"/>
    <circle cx="478" cy="171" r="8" fill="url(#glens)" stroke="#cfd8ee" stroke-width="1.6"/>
    <path d="M473.8 171 h8.4 M478 166.8 v8.4" stroke="#fff" stroke-width="1.5"/>
    <circle cx="478" cy="171" r="5.6" fill="none" stroke="#e8ecf6" stroke-width=".7"/>
  </g>
  <g id="mag2">
    <path d="M527.4 177.6 L516.4 188" stroke="url(#ghandle)" stroke-width="2.6" stroke-linecap="round"/>
    <path d="M526.2 178.6 L522.3 182" stroke="#ececec" stroke-width="3" stroke-linecap="round"/>
    <circle cx="533.8" cy="171" r="8" fill="url(#glens)" stroke="#cfd8ee" stroke-width="1.6"/>
  </g>
  <g id="mag3">
    <path d="M582.7 177.6 L571 188" stroke="url(#ghandle)" stroke-width="2.6" stroke-linecap="round"/>
    <path d="M581.5 178.6 L577.6 182" stroke="#ececec" stroke-width="3" stroke-linecap="round"/>
    <circle cx="589.1" cy="171" r="8" fill="url(#glens)" stroke="#cfd8ee" stroke-width="1.6"/>
    <rect x="584.6" y="169.6" width="9" height="2.8" rx="1.2" fill="#6474a2" stroke="#fff" stroke-width=".9"/>
  </g>
  <!-- Close window -->
  <g>
    <circle cx="641.5" cy="174.6" r="14.6" fill="url(#ggreen)" stroke="#c9eab5" stroke-width="1.1"/>
    <path d="M628.5 170 A14 14 0 0 1 654.5 170 Q641.5 178 628.5 170 Z" fill="#fff" opacity=".13"/>
    <path d="M633.6 174.6 L639.6 180.6 L650.4 168" fill="none" stroke="#fff" stroke-width="3.5" stroke-linejoin="miter"/>
  </g>
  <!-- scrollbar arrows -->
  <path d="M1138.5 250.5 L1142 247 L1145.5 250.5" fill="none" stroke="#505050" stroke-width="1.4"/>
  <path d="M1138.5 839.5 L1142 843 L1145.5 839.5" fill="none" stroke="#505050" stroke-width="1.4"/>
</svg>



<!-- document rules & bands -->
<div class="hl" style="left:225px;top:262px;width:111px;height:1px"></div>
<div class="hl" style="left:225px;top:328px;width:111px;height:1px"></div>
<div class="hl" style="left:225px;top:329px;width:635px;height:1px"></div>
<div class="hl" style="left:225px;top:412px;width:641px;height:1px"></div>
<div class="band" style="left:225px;top:430px;width:635px;height:22px"></div>
<div class="hl" style="left:225px;top:651px;width:635px;height:1px"></div>
<div class="band" style="left:225px;top:668px;width:635px;height:23px"></div>
<div class="hl" style="left:225px;top:723px;width:635px;height:1px"></div>
<div class="band" style="left:225px;top:741px;width:324px;height:23px"></div>
<div class="hl" style="left:225px;top:812px;width:324px;height:1px"></div>
<div class="hl" style="left:225px;top:846px;width:635px;height:1px"></div>


<div class="a" id="txt" style="left:0;top:0">
<span class="t" style="font-size:11.5px;color:#eceef0;left:24.7px;top:40.5px;letter-spacing:-0.16px;">Design</span>
<span class="t" style="font-size:11.5px;color:#eceef0;left:10.5px;top:53.5px;letter-spacing:0.19px;">hydrostatics</span>
<span class="t" style="font-size:11.5px;color:#dfe3e6;left:82.0px;top:40.5px;letter-spacing:0.25px;">Hydrostatics</span>
<span class="t" style="font-size:11.5px;color:#dfe3e6;left:180.6px;top:27.5px;letter-spacing:-0.23px;">Resistance</span>
<span class="t" style="font-size:11px;color:#adbac7;font-weight:bold;left:90.0px;top:68.8px;letter-spacing:-0.24px;">Hydrostatics</span>
<span class="t" style="font-size:11px;color:#76818a;left:6.7px;top:93.8px;letter-spacing:-0.15px;">Perspective</span>
<span class="t" style="font-size:11px;color:#f2f2f2;-webkit-text-stroke:.3px #f2f2f2;left:234.5px;top:97.8px;letter-spacing:-0.15px;">Perspective</span>
<span class="t" style="font-size:11.5px;color:#eceef0;left:-1.0px;top:195.6px;letter-spacing:-0.52px;">Setup</span>
<span class="t" style="font-size:11.5px;color:#c4ccd3;left:-3.0px;top:223.6px;letter-spacing:-0.59px;">nt</span>
<span class="t" style="font-size:11.5px;color:#7f8a93;left:49.0px;top:195.6px;letter-spacing:-0.09px;">First</span>
<span class="t" style="font-size:11.5px;color:#7f8a93;left:82.5px;top:195.6px;letter-spacing:-0.11px;">Previous</span>
<span class="t" style="font-size:11.5px;color:#eceef0;left:135.4px;top:195.6px;letter-spacing:-0.09px;">Page: 1/2</span>
<span class="t" style="font-size:11.5px;color:#eceef0;left:194.6px;top:195.6px;letter-spacing:0.11px;">Next</span>
<span class="t" style="font-size:11.5px;color:#eceef0;left:232.8px;top:195.6px;letter-spacing:-0.42px;">Last</span>
<span class="t" style="font-size:11.5px;color:#c4ccd3;left:138.6px;top:223.6px;letter-spacing:-0.45px;">Page</span>
<span class="t" style="font-size:11.5px;color:#eceef0;left:286.0px;top:195.6px;letter-spacing:-0.12px;">Display</span>
<span class="t" style="font-size:11.5px;color:#eceef0;left:275.5px;top:208.6px;letter-spacing:0.22px;">bookmarks</span>
<span class="t" style="font-size:11.5px;color:#eceef0;left:342.8px;top:195.6px;letter-spacing:0.21px;">Actual</span>
<span class="t" style="font-size:11.5px;color:#eceef0;left:349.8px;top:208.6px;letter-spacing:-0.48px;">size</span>
<span class="t" style="font-size:11.5px;color:#eceef0;left:392.5px;top:195.6px;letter-spacing:0.11px;">Fit</span>
<span class="t" style="font-size:11.5px;color:#eceef0;left:384.5px;top:208.6px;letter-spacing:0.54px;">width</span>
<span class="t" style="font-size:11.5px;color:#eceef0;left:430.0px;top:195.6px;letter-spacing:0.11px;">Fit</span>
<span class="t" style="font-size:11.5px;color:#eceef0;left:424.0px;top:208.6px;letter-spacing:-0.20px;">page</span>
<span class="t" style="font-size:11.5px;color:#eceef0;left:458.0px;top:195.6px;letter-spacing:0.53px;">Zoom</span>
<span class="t" style="font-size:11.5px;color:#eceef0;left:469.0px;top:208.6px;letter-spacing:0.05px;">in</span>
<span class="t" style="font-size:11.5px;color:#eceef0;left:498.0px;top:195.6px;letter-spacing:0.12px;">Zoom 100%</span>
<span class="t" style="font-size:11.5px;color:#eceef0;left:569.1px;top:195.6px;letter-spacing:0.53px;">Zoom</span>
<span class="t" style="font-size:11.5px;color:#eceef0;left:576.1px;top:208.6px;letter-spacing:0.50px;">out</span>
<span class="t" style="font-size:11.5px;color:#eceef0;left:626.9px;top:195.6px;letter-spacing:-0.10px;">Close</span>
<span class="t" style="font-size:11.5px;color:#eceef0;left:620.9px;top:208.6px;letter-spacing:0.53px;">window</span>
<span class="t" style="font-size:11.5px;color:#c4ccd3;left:425.5px;top:223.6px;letter-spacing:-0.24px;">View</span>
<span class="t" style="font-size:10.5px;color:#d2d2d2;-webkit-text-stroke:.35px #d2d2d2;left:1150.7px;top:145.1px;letter-spacing:1.02px;">lopable</span>
<span class="t" style="font-size:10.5px;color:#d2d2d2;-webkit-text-stroke:.35px #d2d2d2;left:1206.5px;top:145.1px;letter-spacing:-0.04px;">Gauss</span>
<span class="t" style="font-size:10.5px;color:#d2d2d2;-webkit-text-stroke:.35px #d2d2d2;left:1253.8px;top:145.1px;letter-spacing:0.44px;">Zebra</span>
<span class="t" style="font-size:10.5px;color:#d2d2d2;-webkit-text-stroke:.35px #d2d2d2;left:1300.0px;top:145.1px;letter-spacing:0.53px;">Environment map</span>
<span class="t" style="font-size:10.5px;color:#d2d2d2;-webkit-text-stroke:.35px #d2d2d2;left:1427.5px;top:145.1px;letter-spacing:0.30px;">Clip</span>
<span class="t" style="font-size:10.5px;color:#d2d2d2;-webkit-text-stroke:.35px #d2d2d2;left:1468.5px;top:145.1px;letter-spacing:0.59px;">Clipping volume</span>
<span class="t" style="font-size:10.5px;color:#d2d2d2;-webkit-text-stroke:.35px #d2d2d2;left:1583.5px;top:145.1px;letter-spacing:0.43px;">Coordinate axes</span>
<span class="t" style="font-size:19.5px;color:#173a68;font-weight:bold;font-style:italic;-webkit-text-stroke:.5px #173a68;left:224.5px;top:239.6px;letter-spacing:1.07px;">SampleHull-MultiCAT</span>
<span class="t" style="font-size:10.5px;color:#0c0c0c;font-weight:bold;left:227.5px;top:265.1px;letter-spacing:-0.11px;">Designer</span>
<span class="t" style="font-size:10.5px;color:#2c2c2c;left:294.0px;top:265.1px;letter-spacing:1.11px;">AH</span>
<span class="t" style="font-size:10.5px;color:#0c0c0c;font-weight:bold;left:227.5px;top:281.1px;">Created by</span>
<span class="t" style="font-size:10.5px;color:#2c2c2c;left:294.0px;top:281.1px;letter-spacing:1.11px;">AH</span>
<span class="t" style="font-size:10.5px;color:#0c0c0c;font-weight:bold;left:227.5px;top:298.1px;letter-spacing:0.15px;">Comment</span>
<span class="t" style="font-size:10.5px;color:#0c0c0c;font-weight:bold;left:227.5px;top:315.1px;letter-spacing:0.11px;">Filename</span>
<span class="t" style="font-size:10.5px;color:#2c2c2c;left:294.0px;top:315.1px;letter-spacing:0.26px;">14.fbm</span>
<span class="t" style="font-size:10.5px;color:#0c0c0c;font-weight:bold;left:227.5px;top:332.1px;letter-spacing:0.11px;">Design length</span>
<span class="t" style="font-size:10.5px;color:#0c0c0c;font-weight:bold;left:227.5px;top:349.1px;letter-spacing:0.07px;">Length of buoyancy model</span>
<span class="t" style="font-size:10.5px;color:#0c0c0c;font-weight:bold;left:227.5px;top:366.1px;letter-spacing:0.07px;">Design beam</span>
<span class="t" style="font-size:10.5px;color:#0c0c0c;font-weight:bold;left:227.5px;top:382.1px;letter-spacing:0.38px;">Maximum beam</span>
<span class="t" style="font-size:10.5px;color:#0c0c0c;font-weight:bold;left:227.5px;top:399.1px;letter-spacing:0.09px;">Design draft</span>
<span class="t" style="font-size:10.5px;color:#2c2c2c;left:500.2px;top:332.1px;letter-spacing:0.07px;">27.270 m</span>
<span class="t" style="font-size:10.5px;color:#2c2c2c;left:500.2px;top:349.1px;letter-spacing:0.07px;">27.270 m</span>
<span class="t" style="font-size:10.5px;color:#2c2c2c;left:500.2px;top:366.1px;letter-spacing:0.19px;">11.500 m</span>
<span class="t" style="font-size:10.5px;color:#2c2c2c;left:500.2px;top:382.1px;letter-spacing:0.19px;">11.500 m</span>
<span class="t" style="font-size:10.5px;color:#2c2c2c;left:504.9px;top:399.1px;letter-spacing:0.27px;">2.850 m</span>
<span class="t" style="font-size:10.5px;color:#0c0c0c;font-weight:bold;left:562.6px;top:332.1px;letter-spacing:0.18px;">Midship location</span>
<span class="t" style="font-size:10.5px;color:#0c0c0c;font-weight:bold;left:562.6px;top:349.1px;letter-spacing:0.13px;">Water density</span>
<span class="t" style="font-size:10.5px;color:#0c0c0c;font-weight:bold;left:562.6px;top:366.1px;letter-spacing:-0.07px;">Mean shell thickness</span>
<span class="t" style="font-size:10.5px;color:#0c0c0c;font-weight:bold;left:562.6px;top:382.1px;letter-spacing:0.14px;">Appendage coefficient</span>
<span class="t" style="font-size:10.5px;color:#2c2c2c;left:799.5px;top:332.1px;letter-spacing:-0.04px;">13.635 m</span>
<span class="t" style="font-size:10.5px;color:#2c2c2c;left:799.5px;top:349.1px;letter-spacing:-0.33px;">1.0250</span>
<span class="t" style="font-size:10.5px;color:#2c2c2c;left:799.5px;top:366.1px;letter-spacing:-0.04px;">0.0000 m</span>
<span class="t" style="font-size:10.5px;color:#2c2c2c;left:799.5px;top:382.1px;letter-spacing:-0.33px;">1.0000</span>
<span class="t" style="font-size:14px;color:#111;font-weight:bold;left:313.0px;top:435.3px;letter-spacing:0.53px;">Volume properties</span>
<span class="t" style="font-size:14px;color:#111;font-weight:bold;left:616.6px;top:435.3px;letter-spacing:0.54px;">Waterplane properties</span>
<span class="t" style="font-size:10.5px;color:#2c2c2c;left:227.5px;top:454.1px;letter-spacing:0.33px;">Moulded volume</span>
<span class="t" style="font-size:10.5px;color:#2c2c2c;left:227.5px;top:471.1px;letter-spacing:0.18px;">Total displaced volume</span>
<span class="t" style="font-size:10.5px;color:#2c2c2c;left:227.5px;top:488.1px;letter-spacing:0.03px;">Displacement</span>
<span class="t" style="font-size:10.5px;color:#2c2c2c;left:227.5px;top:504.0px;letter-spacing:0.14px;">Block coefficient</span>
<span class="t" style="font-size:10.5px;color:#2c2c2c;left:227.5px;top:521.0px;letter-spacing:0.15px;">Prismatic coefficient</span>
<span class="t" style="font-size:10.5px;color:#2c2c2c;left:227.5px;top:538.0px;letter-spacing:0.17px;">Vert. prismatic coefficient</span>
<span class="t" style="font-size:10.5px;color:#2c2c2c;left:227.5px;top:555.0px;letter-spacing:0.07px;">Wetted surface area</span>
<span class="t" style="font-size:10.5px;color:#2c2c2c;left:227.5px;top:571.0px;letter-spacing:0.17px;">Longitudinal center of buoyancy</span>
<span class="t" style="font-size:10.5px;color:#2c2c2c;left:227.5px;top:588.0px;letter-spacing:0.17px;">Longitudinal center of buoyancy</span>
<span class="t" style="font-size:10.5px;color:#2c2c2c;left:227.5px;top:605.0px;letter-spacing:0.17px;">Vertical center of buoyancy</span>
<span class="t" style="font-size:10.5px;color:#2c2c2c;left:227.5px;top:621.0px;letter-spacing:0.28px;">Total length of submerged body</span>
<span class="t" style="font-size:10.5px;color:#2c2c2c;left:227.5px;top:638.0px;letter-spacing:0.23px;">Total beam of submerged body</span>
<span class="t" style="font-size:10.5px;color:#2c2c2c;left:465.2px;top:454.1px;letter-spacing:0.10px;">774.318 m³</span>
<span class="t" style="font-size:10.5px;color:#2c2c2c;left:465.2px;top:471.1px;letter-spacing:0.10px;">774.318 m³</span>
<span class="t" style="font-size:10.5px;color:#2c2c2c;left:465.2px;top:488.1px;letter-spacing:0.11px;">793.675 t</span>
<span class="t" style="font-size:10.5px;color:#2c2c2c;left:471.1px;top:504.0px;letter-spacing:-0.11px;">0.9124</span>
<span class="t" style="font-size:10.5px;color:#2c2c2c;left:471.1px;top:521.0px;letter-spacing:-0.11px;">0.9125</span>
<span class="t" style="font-size:10.5px;color:#2c2c2c;left:471.1px;top:538.0px;letter-spacing:-0.11px;">0.9131</span>
<span class="t" style="font-size:10.5px;color:#2c2c2c;left:471.1px;top:555.0px;letter-spacing:0.10px;">470.90 m²</span>
<span class="t" style="font-size:10.5px;color:#2c2c2c;left:471.1px;top:571.0px;letter-spacing:0.07px;">12.979 m</span>
<span class="t" style="font-size:10.5px;color:#2c2c2c;left:472.0px;top:588.0px;letter-spacing:0.07px;">-2.535 %</span>
<span class="t" style="font-size:10.5px;color:#2c2c2c;left:477.0px;top:605.0px;letter-spacing:0.07px;">1.489 m</span>
<span class="t" style="font-size:10.5px;color:#2c2c2c;left:471.1px;top:621.0px;letter-spacing:0.07px;">25.893 m</span>
<span class="t" style="font-size:10.5px;color:#2c2c2c;left:471.1px;top:638.0px;letter-spacing:0.19px;">11.500 m</span>
<span class="t" style="font-size:10.5px;color:#2c2c2c;left:533.1px;top:454.1px;letter-spacing:0.22px;">Length on waterline</span>
<span class="t" style="font-size:10.5px;color:#2c2c2c;left:533.1px;top:471.1px;letter-spacing:0.10px;">Beam on waterline</span>
<span class="t" style="font-size:10.5px;color:#2c2c2c;left:533.1px;top:488.1px;letter-spacing:-0.02px;">Entrance angle</span>
<span class="t" style="font-size:10.5px;color:#2c2c2c;left:533.1px;top:504.0px;letter-spacing:0.15px;">Waterplane area</span>
<span class="t" style="font-size:10.5px;color:#2c2c2c;left:533.1px;top:521.0px;letter-spacing:0.24px;">Waterplane coefficient</span>
<span class="t" style="font-size:10.5px;color:#2c2c2c;left:533.1px;top:538.0px;letter-spacing:0.28px;">Waterplane center of floatation</span>
<span class="t" style="font-size:10.5px;color:#2c2c2c;left:533.1px;top:555.0px;letter-spacing:0.14px;">Transverse moment of inertia</span>
<span class="t" style="font-size:10.5px;color:#2c2c2c;left:533.1px;top:571.0px;letter-spacing:0.29px;">Longitudinal moment of inertia</span>
<span class="t" style="font-size:10.5px;color:#2c2c2c;left:786.9px;top:454.1px;">25.893 m</span>
<span class="t" style="font-size:10.5px;color:#2c2c2c;left:786.9px;top:471.1px;letter-spacing:0.11px;">11.500 m</span>
<span class="t" style="font-size:10.5px;color:#2c2c2c;left:797.9px;top:488.1px;letter-spacing:0.35px;">90.0 degr</span>
<span class="t" style="font-size:10.5px;color:#2c2c2c;left:786.9px;top:504.0px;letter-spacing:0.04px;">297.56 m²</span>
<span class="t" style="font-size:10.5px;color:#2c2c2c;left:786.9px;top:521.0px;letter-spacing:-0.26px;">0.9993</span>
<span class="t" style="font-size:10.5px;color:#2c2c2c;left:786.9px;top:538.0px;">12.955 m</span>
<span class="t" style="font-size:10.5px;color:#2c2c2c;left:774.7px;top:555.0px;letter-spacing:-0.02px;">3275.841 m⁴</span>
<span class="t" style="font-size:10.5px;color:#2c2c2c;left:770.5px;top:571.0px;letter-spacing:-0.16px;">16602.319 m⁴</span>
<span class="t" style="font-size:14px;color:#111;font-weight:bold;left:296.2px;top:673.3px;letter-spacing:0.49px;">Midship properties</span>
<span class="t" style="font-size:14px;color:#111;font-weight:bold;left:630.0px;top:673.3px;letter-spacing:0.42px;">Initial stability</span>
<span class="t" style="font-size:10.5px;color:#2c2c2c;left:227.5px;top:693.0px;letter-spacing:0.14px;">Midship section area</span>
<span class="t" style="font-size:10.5px;color:#2c2c2c;left:440.4px;top:693.0px;letter-spacing:-0.09px;">32.77 m²</span>
<span class="t" style="font-size:10.5px;color:#2c2c2c;left:227.5px;top:710.0px;letter-spacing:0.29px;">Midship coefficient</span>
<span class="t" style="font-size:10.5px;color:#2c2c2c;left:434.0px;top:710.0px;letter-spacing:-0.26px;">0.9999</span>
<span class="t" style="font-size:10.5px;color:#2c2c2c;left:502.3px;top:693.0px;letter-spacing:0.09px;">Transverse metacentric height</span>
<span class="t" style="font-size:10.5px;color:#2c2c2c;left:805.0px;top:693.0px;letter-spacing:0.14px;">5.719 m</span>
<span class="t" style="font-size:10.5px;color:#2c2c2c;left:502.3px;top:710.0px;letter-spacing:0.23px;">Longitudinal metacentric height</span>
<span class="t" style="font-size:10.5px;color:#2c2c2c;left:800.0px;top:710.0px;">22.930 m</span>
<span class="t" style="font-size:14px;color:#111;font-weight:bold;left:342.0px;top:746.3px;letter-spacing:0.30px;">Lateral plane</span>
<span class="t" style="font-size:10.5px;color:#2c2c2c;left:227.5px;top:766.0px;letter-spacing:-0.11px;">Lateral area</span>
<span class="t" style="font-size:10.5px;color:#2c2c2c;left:496.0px;top:766.0px;letter-spacing:0.11px;">67.34 m²</span>
<span class="t" style="font-size:10.5px;color:#2c2c2c;left:227.5px;top:782.0px;letter-spacing:0.13px;">Longitudinal center of lateral resistance</span>
<span class="t" style="font-size:10.5px;color:#2c2c2c;left:490.0px;top:782.0px;letter-spacing:0.15px;">12.972 m</span>
<span class="t" style="font-size:10.5px;color:#2c2c2c;left:227.5px;top:799.0px;letter-spacing:0.10px;">Vertical center of lateral resistance</span>
<span class="t" style="font-size:10.5px;color:#2c2c2c;left:496.0px;top:799.0px;letter-spacing:0.14px;">1.489 m</span>
<span class="t" style="font-size:11.5px;color:#111;font-weight:bold;left:224.5px;top:831.5px;letter-spacing:0.24px;">The following layer properties are calculated for both sides of the ship</span>
</div>
</body></html>
